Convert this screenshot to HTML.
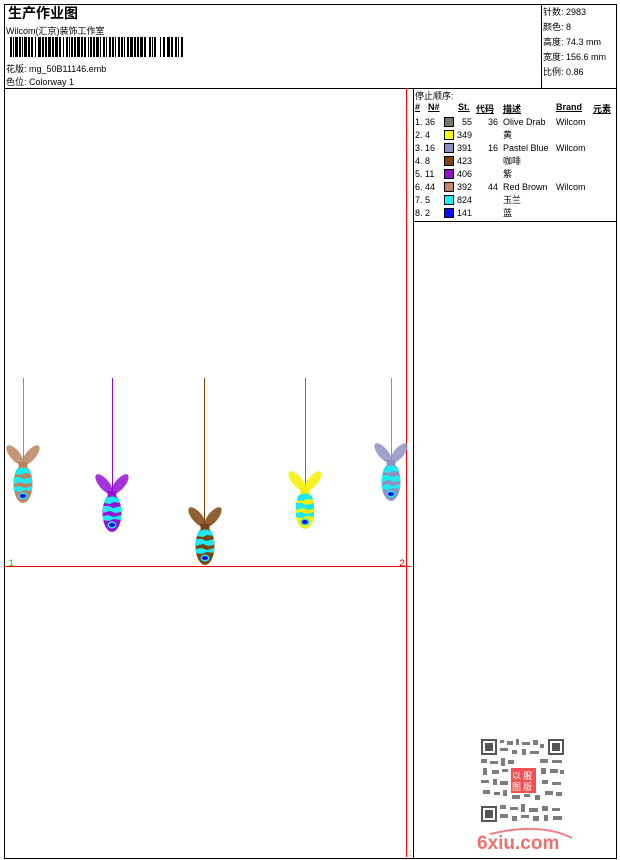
<!DOCTYPE html>
<html><head><meta charset="utf-8"><style>
body{margin:0;background:#fff;width:620px;height:860px;position:relative;overflow:hidden;font-family:"Liberation Sans","Noto Sans CJK SC",sans-serif;color:#000}
.a{position:absolute;white-space:nowrap}
.s{font-size:9px}
</style></head><body>
<svg width="620" height="860" style="position:absolute;left:0;top:0" xmlns="http://www.w3.org/2000/svg">
<defs>
<g id="body">
<ellipse cx="-8" cy="9" rx="12" ry="5" transform="rotate(50 -8 9)" fill="currentColor" opacity=".85"/>
<ellipse cx="8" cy="9" rx="12" ry="5" transform="rotate(-50 8 9)" fill="currentColor" opacity=".85"/>
<path d="M-5 16 L5 16 L4 22 L-4 22 Z" fill="currentColor"/>
<ellipse cx="0" cy="38" rx="9.5" ry="19" fill="currentColor"/>
<path d="M-7 24 Q0 19 7 24 L8 28 L2 27 L-2 29 L-8 28 Z" fill="#1ee8f0"/>
<path d="M-9 31 L-3 31 L1 33 L9 31 L9 37 L3 38 L-2 36 L-9 38 Z" fill="#1ee8f0"/>
<path d="M-9 41 L-4 40 L2 42 L9 40 L9 45 L2 44 L-3 46 L-9 45 Z" fill="#1ee8f0"/>
<ellipse cx="0" cy="50" rx="4.5" ry="3.5" fill="#1ee8f0"/>
<ellipse cx="0" cy="50" rx="3" ry="2" fill="#0010e0"/>
</g>
</defs>
<rect x="4.5" y="4.5" width="612" height="854" fill="none" stroke="#000"/>
<line x1="4" y1="88.5" x2="617" y2="88.5" stroke="#000"/>
<line x1="541.5" y1="4" x2="541.5" y2="88" stroke="#000"/>
<line x1="413.5" y1="88" x2="413.5" y2="859" stroke="#000"/>
<line x1="413" y1="221.5" x2="617" y2="221.5" stroke="#000"/>
<line x1="406.5" y1="88" x2="406.5" y2="857" stroke="red"/>
<line x1="4" y1="566.5" x2="411" y2="566.5" stroke="red"/>
<g fill="#000">
<rect x="10" y="37" width="2" height="20"/><rect x="13" y="37" width="1" height="20"/><rect x="15" y="37" width="3" height="20"/><rect x="19" y="37" width="2" height="20"/><rect x="22" y="37" width="1" height="20"/><rect x="24" y="37" width="3" height="20"/><rect x="28" y="37" width="2" height="20"/><rect x="31" y="37" width="2" height="20"/><rect x="35" y="37" width="1" height="20"/><rect x="38" y="37" width="3" height="20"/><rect x="42" y="37" width="2" height="20"/><rect x="45" y="37" width="2" height="20"/><rect x="48" y="37" width="3" height="20"/><rect x="52" y="37" width="2" height="20"/><rect x="55" y="37" width="3" height="20"/><rect x="59" y="37" width="2" height="20"/><rect x="63" y="37" width="1" height="20"/><rect x="66" y="37" width="2" height="20"/><rect x="69" y="37" width="1" height="20"/><rect x="71" y="37" width="2" height="20"/><rect x="74" y="37" width="2" height="20"/><rect x="77" y="37" width="3" height="20"/><rect x="81" y="37" width="2" height="20"/><rect x="84" y="37" width="2" height="20"/><rect x="88" y="37" width="1" height="20"/><rect x="90" y="37" width="2" height="20"/><rect x="93" y="37" width="2" height="20"/><rect x="96" y="37" width="3" height="20"/><rect x="100" y="37" width="1" height="20"/><rect x="103" y="37" width="2" height="20"/><rect x="106" y="37" width="1" height="20"/><rect x="109" y="37" width="2" height="20"/><rect x="112" y="37" width="2" height="20"/><rect x="115" y="37" width="1" height="20"/><rect x="118" y="37" width="2" height="20"/><rect x="121" y="37" width="2" height="20"/><rect x="124" y="37" width="1" height="20"/><rect x="127" y="37" width="2" height="20"/><rect x="130" y="37" width="3" height="20"/><rect x="134" y="37" width="2" height="20"/><rect x="137" y="37" width="2" height="20"/><rect x="140" y="37" width="3" height="20"/><rect x="144" y="37" width="2" height="20"/><rect x="149" y="37" width="2" height="20"/><rect x="152" y="37" width="1" height="20"/><rect x="154" y="37" width="2" height="20"/><rect x="160" y="37" width="1" height="20"/><rect x="163" y="37" width="2" height="20"/><rect x="167" y="37" width="3" height="20"/><rect x="171" y="37" width="2" height="20"/><rect x="175" y="37" width="2" height="20"/><rect x="178" y="37" width="1" height="20"/><rect x="181" y="37" width="2" height="20"/>
</g>
<line x1="23.5" y1="378" x2="23.5" y2="466" stroke="#b8825e"/>
<line x1="112.5" y1="378" x2="112.5" y2="495" stroke="#9010d0"/>
<line x1="204.5" y1="378" x2="204.5" y2="528" stroke="#7a4010"/>
<line x1="305.5" y1="378" x2="305.5" y2="492" stroke="#707070"/>
<line x1="391.5" y1="378" x2="391.5" y2="465" stroke="#9090c0"/>
<use href="#body" x="23" y="446" style="color:#bb8460"/>
<use href="#body" x="112" y="475" style="color:#9410d4"/>
<use href="#body" x="205" y="508" style="color:#7a4410"/>
<use href="#body" x="305" y="472" style="color:#f4f000"/>
<use href="#body" x="391" y="444" style="color:#9090c4"/>
<text x="8" y="566" font-size="10" fill="#00e000" font-family="Liberation Mono">1</text>
<text x="399" y="566" font-size="10" fill="red" font-family="Liberation Mono">2</text>
<text x="409" y="856" font-size="8" fill="red">:</text>
<g stroke="#000" stroke-width="1">
<rect x="444.5" y="117.5" width="9" height="9" fill="#787868"/>
<rect x="444.5" y="130.5" width="9" height="9" fill="#ffff00"/>
<rect x="444.5" y="143.5" width="9" height="9" fill="#9090c0"/>
<rect x="444.5" y="156.5" width="9" height="9" fill="#804010"/>
<rect x="444.5" y="169.5" width="9" height="9" fill="#9010d0"/>
<rect x="444.5" y="182.5" width="9" height="9" fill="#c08868"/>
<rect x="444.5" y="195.5" width="9" height="9" fill="#20f0f0"/>
<rect x="444.5" y="208.5" width="9" height="9" fill="#0010f0"/>
</g>
<g fill="#555">
<rect x="481" y="739" width="16" height="16"/><rect x="548" y="739" width="16" height="16"/><rect x="481" y="806" width="16" height="16"/>
</g>
<g fill="#fff"><rect x="483" y="741" width="12" height="12"/><rect x="550" y="741" width="12" height="12"/><rect x="483" y="808" width="12" height="12"/></g>
<g fill="#555"><rect x="485" y="743" width="8" height="8"/><rect x="552" y="743" width="8" height="8"/><rect x="485" y="810" width="8" height="8"/></g>
<g fill="#666" opacity=".85">
<rect x="500" y="740" width="4" height="3"/><rect x="507" y="741" width="6" height="4"/><rect x="516" y="739" width="3" height="6"/><rect x="522" y="742" width="8" height="3"/><rect x="533" y="740" width="5" height="5"/><rect x="540" y="744" width="4" height="4"/>
<rect x="500" y="748" width="8" height="3"/><rect x="512" y="750" width="5" height="4"/><rect x="522" y="749" width="4" height="6"/><rect x="530" y="751" width="9" height="3"/>
<rect x="481" y="759" width="6" height="4"/><rect x="490" y="761" width="8" height="3"/><rect x="501" y="758" width="4" height="8"/><rect x="508" y="760" width="6" height="4"/><rect x="540" y="759" width="8" height="4"/><rect x="552" y="760" width="10" height="3"/>
<rect x="483" y="768" width="4" height="7"/><rect x="492" y="770" width="7" height="4"/><rect x="502" y="769" width="6" height="3"/><rect x="541" y="768" width="5" height="6"/><rect x="550" y="769" width="8" height="4"/><rect x="560" y="770" width="4" height="4"/>
<rect x="481" y="780" width="8" height="3"/><rect x="493" y="779" width="4" height="6"/><rect x="500" y="781" width="8" height="4"/><rect x="542" y="780" width="6" height="4"/><rect x="552" y="782" width="9" height="3"/>
<rect x="483" y="790" width="7" height="4"/><rect x="494" y="792" width="6" height="3"/><rect x="503" y="790" width="4" height="6"/><rect x="512" y="795" width="8" height="4"/><rect x="524" y="794" width="6" height="3"/><rect x="535" y="795" width="5" height="5"/><rect x="545" y="791" width="8" height="4"/><rect x="556" y="792" width="6" height="4"/>
<rect x="500" y="805" width="6" height="4"/><rect x="510" y="807" width="8" height="3"/><rect x="521" y="804" width="4" height="8"/><rect x="529" y="808" width="9" height="4"/><rect x="542" y="806" width="6" height="5"/><rect x="552" y="808" width="8" height="3"/>
<rect x="500" y="814" width="8" height="4"/><rect x="512" y="816" width="5" height="5"/><rect x="521" y="815" width="8" height="3"/><rect x="533" y="816" width="6" height="5"/><rect x="544" y="815" width="4" height="6"/><rect x="553" y="816" width="9" height="4"/>
</g>
<rect x="511" y="768" width="25" height="25" fill="#f05050"/>
<text x="512" y="779" font-size="9" fill="#fff" font-family="Noto Sans CJK SC">以</text><text x="523" y="779" font-size="9" fill="#fff" font-family="Noto Sans CJK SC">服</text>
<text x="512" y="790" font-size="9" fill="#fff" font-family="Noto Sans CJK SC">图</text><text x="523" y="790" font-size="9" fill="#fff" font-family="Noto Sans CJK SC">版</text>
<path d="M490 834 Q540 822 572 838" stroke="#f08080" stroke-width="2" fill="none"/>
<text x="477" y="849" font-size="19" font-weight="bold" fill="#f07070" font-family="Liberation Sans">6xiu.com</text>
</svg>

<div class="a" style="left:8px;top:3px;font-size:14px;font-weight:bold">生产作业图</div>
<div class="a s" style="left:6px;top:24px">Wilcom(汇京)装饰工作室</div>
<div class="a s" style="left:6px;top:62px">花版: mg_50B11146.emb</div>
<div class="a s" style="left:6px;top:75px">色位: Colorway 1</div>

<div class="a s" style="left:543px;top:5px;line-height:15px">针数: 2983<br>颜色: 8<br>高度: 74.3 mm<br>宽度: 156.6 mm<br>比例: 0.86</div>

<div class="a s" style="left:415px;top:89px">停止顺序:</div>
<div class="a s" style="left:415px;top:102px;font-weight:bold;text-decoration:underline">#</div>
<div class="a s" style="left:428px;top:102px;font-weight:bold;text-decoration:underline">N#</div>
<div class="a s" style="left:458px;top:102px;font-weight:bold;text-decoration:underline">St.</div>
<div class="a s" style="left:476px;top:102px;font-weight:bold;text-decoration:underline">代码</div>
<div class="a s" style="left:503px;top:102px;font-weight:bold;text-decoration:underline">描述</div>
<div class="a s" style="left:556px;top:102px;font-weight:bold;text-decoration:underline">Brand</div>
<div class="a s" style="left:593px;top:102px;font-weight:bold;text-decoration:underline">元素</div>

<div class="a s" style="left:415px;top:116px;line-height:13px">1. 36<br>2. 4<br>3. 16<br>4. 8<br>5. 11<br>6. 44<br>7. 5<br>8. 2</div>
<div class="a s" style="left:457px;top:116px;line-height:13px">&nbsp;&nbsp;55<br>349<br>391<br>423<br>406<br>392<br>824<br>141</div>
<div class="a s" style="left:488px;top:116px;line-height:13px">36<br><br>16<br><br><br>44</div>
<div class="a s" style="left:503px;top:116px;line-height:13px">Olive Drab<br>黄<br>Pastel Blue<br>咖啡<br>紫<br>Red Brown<br>玉兰<br>蓝</div>
<div class="a s" style="left:556px;top:116px;line-height:13px">Wilcom<br><br>Wilcom<br><br><br>Wilcom</div>
</body></html>
